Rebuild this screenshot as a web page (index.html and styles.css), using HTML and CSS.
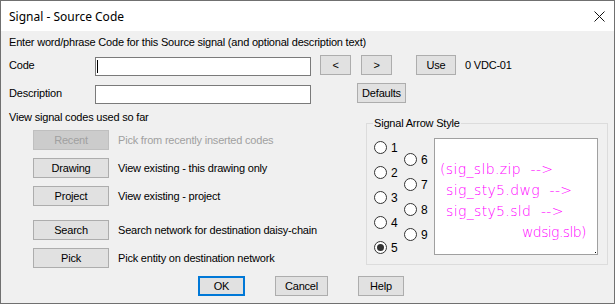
FILE: index.html
```html
<!DOCTYPE html>
<html>
<head>
<meta charset="utf-8">
<link rel="stylesheet" href="styles.css">
</head>
<body>
<div class="window">
  <div class="titlebar">
    <span class="title">Signal - Source Code</span>
    <svg class="close" width="11" height="11" viewBox="0 0 11 11"><path d="M0.5 0.5 L10.5 10.5 M10.5 0.5 L0.5 10.5" stroke="#111" stroke-width="1" fill="none"/></svg>
  </div>
  <div class="body">
    <div class="intro">Enter word/phrase Code for this Source signal (and optional description text)</div>
    <div class="row code-row">
      <span class="lbl">Code</span>
      <div class="input"><span class="caret"></span></div>
      <button class="btn nav prev">&lt;</button>
      <button class="btn nav next">&gt;</button>
      <button class="btn use">Use</button>
      <span class="val">0 VDC-01</span>
    </div>
    <div class="row desc-row">
      <span class="lbl">Description</span>
      <div class="input"></div>
      <button class="btn defaults">Defaults</button>
    </div>
    <div class="section">
      <div class="left">
        <div class="sub">View signal codes used so far</div>
        <div class="actions">
          <div class="act"><button class="btn act-btn disabled">Recent</button><span class="desc dis">Pick from recently inserted codes</span></div>
          <div class="act"><button class="btn act-btn">Drawing</button><span class="desc">View existing - this drawing only</span></div>
          <div class="act"><button class="btn act-btn">Project</button><span class="desc">View existing - project</span></div>
          <div class="act gap"><button class="btn act-btn">Search</button><span class="desc">Search network for destination daisy-chain</span></div>
          <div class="act"><button class="btn act-btn">Pick</button><span class="desc">Pick entity on destination network</span></div>
        </div>
      </div>
      <fieldset class="group">
        <legend class="legend">Signal Arrow Style</legend>
        <div class="group-inner">
          <div class="radios">
            <div class="rcol col1">
              <div class="radio"><span class="circle"></span><span class="rl">1</span></div>
              <div class="radio"><span class="circle"></span><span class="rl">2</span></div>
              <div class="radio"><span class="circle"></span><span class="rl">3</span></div>
              <div class="radio"><span class="circle"></span><span class="rl">4</span></div>
              <div class="radio"><span class="circle checked"></span><span class="rl">5</span></div>
            </div>
            <div class="rcol col2">
              <div class="radio"><span class="circle"></span><span class="rl">6</span></div>
              <div class="radio"><span class="circle"></span><span class="rl">7</span></div>
              <div class="radio"><span class="circle"></span><span class="rl">8</span></div>
              <div class="radio"><span class="circle"></span><span class="rl">9</span></div>
            </div>
          </div>
          <div class="preview">
            <div class="pl l1">(sig_slb.zip&nbsp;&nbsp;--&gt;</div>
            <div class="pl l2">sig_sty5.dwg&nbsp;&nbsp;--&gt;</div>
            <div class="pl l3">sig_sty5.sld&nbsp;&nbsp;--&gt;</div>
            <div class="pl l4">wdsig.slb)</div>
          </div>
        </div>
      </fieldset>
    </div>
    <div class="footer">
      <button class="btn fbtn ok">OK</button>
      <button class="btn fbtn cancel">Cancel</button>
      <button class="btn fbtn help">Help</button>
    </div>
  </div>
</div>
</body>
</html>
```

FILE: styles.css
```css
* { box-sizing: border-box; }
html, body { margin: 0; padding: 0; background: #f0f0f0; }
body {
  font-family: "Liberation Sans", Arial, sans-serif;
  font-size: 11px;
  letter-spacing: -0.2px;
  color: #000;
}
.window {
  width: 615px;
  height: 304px;
  border: 1px solid #707070;
  background: #f0f0f0;
  display: flex;
  flex-direction: column;
  overflow: hidden;
}
.titlebar {
  height: 30px;
  background: #fff;
  display: flex;
  align-items: center;
  justify-content: space-between;
  padding: 0 9px 0 8px;
  flex: none;
}
.title {
  font-family: "Noto Sans", sans-serif;
  font-size: 12px;
  letter-spacing: 0;
  color: #000;
  padding-top: 1px;
}
.close { display: block; margin-top: 0; }
.body {
  padding-left: 8px;
  flex: 1;
}
.intro {
  height: 24px;
  padding-top: 5px;
  line-height: 13px;
}
.row {
  display: flex;
  align-items: flex-start;
  height: 21px;
}
.code-row { margin-bottom: 7px; }
.lbl {
  width: 86px;
  line-height: 20px;
}
.input {
  width: 216px;
  height: 19px;
  margin-top: 2px;
  background: #fff;
  border: 1px solid #7a7a7a;
  position: relative;
}
.caret {
  position: absolute;
  left: 1px;
  top: 2px;
  width: 1px;
  height: 13px;
  background: #000;
}
.btn {
  font-family: "Liberation Sans", Arial, sans-serif;
  font-size: 11px;
  letter-spacing: -0.2px;
  color: #000;
  background: #e1e1e1;
  border: 1px solid #adadad;
  height: 20px;
  padding: 0;
  margin: 0;
  line-height: 18px;
  text-align: center;
}
.nav { width: 31px; }
.prev { margin-left: 9px; }
.next { margin-left: 10px; }
.use { width: 40px; margin-left: 24px; }
.val { margin-left: 9px; line-height: 20px; }
.defaults { width: 49px; margin-left: 46px; }

.section {
  display: flex;
  align-items: flex-start;
}
.left { width: 357px; }
.sub {
  padding-top: 7px;
  line-height: 13px;
}
.actions {
  margin-top: 6px;
  display: flex;
  flex-direction: column;
  gap: 8px;
}
.act {
  display: flex;
  align-items: center;
  height: 20px;
}
.act.gap { margin-top: 6px; }
.act-btn { width: 76px; margin-left: 24px; }
.act-btn.disabled {
  background: #cccccc;
  border-color: #bfbfbf;
  color: #a0a0a0;
}
.desc { margin-left: 9px; }
.desc.dis { color: #a0a0a0; }

.group {
  width: 242px;
  margin: 13px 0 0 0;
  padding: 0 9px 4px 0;
  border: 1px solid #dcdcdc;
  min-width: 0;
}
.legend {
  margin-left: 6px;
  padding: 0 1px;
  line-height: 13px;
  font-size: 11px;
}
.group-inner {
  display: flex;
  align-items: flex-start;
}
.radios {
  width: 67px;
  display: flex;
  padding-left: 7px;
}
.rcol { display: flex; flex-direction: column; }
.col1 { width: 30px; padding-top: 5px; }
.col2 { padding-top: 17px; }
.radio {
  height: 25px;
  display: flex;
  align-items: center;
}
.circle {
  width: 13px;
  height: 13px;
  border: 1px solid #333;
  border-radius: 50%;
  background: #fff;
  display: flex;
  align-items: center;
  justify-content: center;
  flex: none;
}
.circle.checked::after {
  content: "";
  width: 7px;
  height: 7px;
  border-radius: 50%;
  background: #333;
}
.rl {
  margin-left: 4px;
  font-size: 12px;
  letter-spacing: 0;
}
.preview {
  width: 164px;
  height: 117px;
  margin-top: 8px;
  background: #fff;
  border: 1px solid #a0a0a0;
  padding: 20px 0 0 5px;
  color: #ff00ff;
  font-family: "DejaVu Sans", "Liberation Sans", sans-serif;
  font-weight: 200;
  font-size: 14px;
  letter-spacing: 0.35px;
  line-height: 21px;
  position: relative;
  white-space: nowrap;
}
.preview::after {
  content: "";
  position: absolute;
  right: 1px;
  bottom: 1px;
  width: 1px;
  height: 1px;
  background: #000;
}
.pl.l2, .pl.l3 { padding-left: 6px; }
.pl.l4 { padding-left: 82px; letter-spacing: -0.6px; }

.footer {
  display: flex;
  margin-top: 8px;
}
.fbtn { height: 20px; }
.ok {
  width: 47px;
  margin-left: 189px;
  border: 2px solid #0078d7;
  line-height: 16px;
}
.cancel { width: 53px; margin-left: 30px; }
.help { width: 46px; margin-left: 30px; }
```
